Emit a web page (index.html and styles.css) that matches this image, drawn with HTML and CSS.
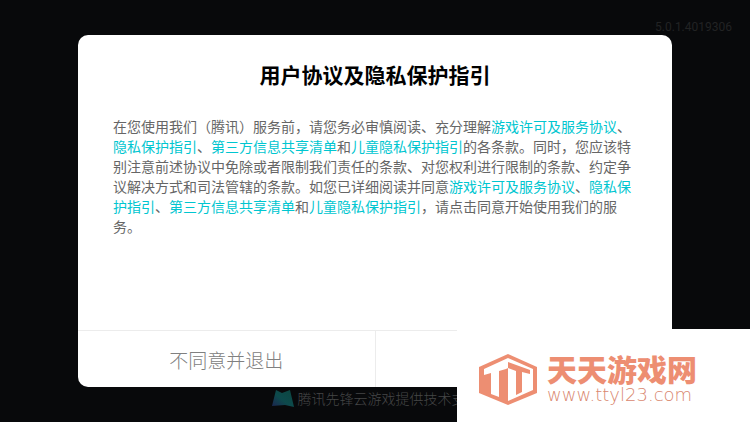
FILE: index.html
```
<!DOCTYPE html>
<html lang="zh-CN">
<head>
  <meta charset="utf-8">
  <title>用户协议及隐私保护指引</title>
  <link rel="stylesheet" href="styles.css">
</head>
<body>
  <header class="version">5.0.1.4019306</header>
  <main class="dialog">
    <h1 class="title">用户协议及隐私保护指引</h1>
    <p class="content">在您使用我们（腾讯）服务前，请您务必审慎阅读、充分理解<a href="#">游戏许可及服务协议</a>、<a href="#">隐私保护指引</a>、<a href="#">第三方信息共享清单</a>和<a href="#">儿童隐私保护指引</a>的各条款。同时，您应该特别注意前述协议中免除或者限制我们责任的条款、对您权利进行限制的条款、约定争议解决方式和司法管辖的条款。如您已详细阅读并同意<a href="#">游戏许可及服务协议</a>、<a href="#">隐私保护指引</a>、<a href="#">第三方信息共享清单</a>和<a href="#">儿童隐私保护指引</a>，请点击同意开始使用我们的服务。</p>
    <div class="btns">
      <button type="button" class="btn">不同意并退出</button>
      <button type="button" class="btn" aria-label="同意"></button>
    </div>
  </main>
  <footer class="support">
    <svg class="support-logo" width="23" height="19" viewBox="0 0 23 19">
      <defs>
        <linearGradient id="wing" x1="0" y1="1" x2="1" y2="0">
          <stop offset="0" stop-color="#1c2350"/>
          <stop offset="0.45" stop-color="#0d4a4c"/>
          <stop offset="1" stop-color="#0c4640"/>
        </linearGradient>
      </defs>
      <path fill="url(#wing)" d="M5 1l6 3 8-3 4 17-9-2-13 1z"/>
    </svg>
    <span>腾讯先锋云游戏提供技术支持</span>
  </footer>
  <!-- 站点水印 -->
  <aside class="watermark">
    <svg class="mark" width="58" height="52" viewBox="0 0 58 52">
      <path fill="#ed8e72" d="M29 0L58 13V39L29 51L0 39V13Z"/>
      <path fill="#fff" d="M5 15L29 4L54 15V36L29 47V14L27 15L20 17V43L12 40V19L5 21Z"/>
      <path fill="#ed8e72" d="M29 8L51 16V20L43 18V38L37 41V17L29 14Z"/>
    </svg>
    <div class="site">
      <strong class="site-name">天天游戏网</strong>
      <span class="site-url">www.ttyl23.com</span>
    </div>
  </aside>
</body>
</html>
```

FILE: styles.css
```
*{
  box-sizing: border-box;
}
body{
  display: flex;
  flex-direction: column;
  min-height: 100vh;
  margin: 0;
  background: #08090b;
  font-family: "Liberation Sans", "Noto Sans CJK SC", sans-serif;
}
.version{
  padding: 20px 18px 1px;
  color: #222324;
  font: 12px/14px Roboto, sans-serif;
  text-align: right;
}
.dialog{
  display: flex;
  flex: 1;
  flex-direction: column;
  margin: 0 78px;
  border-radius: 10px;
  background: #fff;
}
.title{
  margin: 0;
  padding: 26px 35px;
  color: #000;
  font-size: 21px;
  line-height: 30px;
  text-align: center;
}
.content{
  flex: 1;
  margin: 0;
  padding: 0 35px;
  color: #666;
  font-size: 14px;
  line-height: 20px;
}
.content a{
  color: #00c6d0;
  text-decoration: none;
}
.btns{
  display: flex;
  border-top: 1px solid #ececec;
}
.btn{
  flex: 1;
  height: 56px;
  padding: 0;
  border: 0;
  background: none;
  color: #808080;
  font-family: inherit;
  font-size: 19px;
  font-weight: 300;
}
.btn + .btn{
  border-left: 1px solid #ececec;
}
.support{
  display: flex;
  align-items: center;
  justify-content: center;
  gap: 4px;
  height: 35px;
  padding-bottom: 12px;
  color: #454647;
  font-size: 14px;
  font-weight: 300;
  line-height: 20px;
}
.watermark{
  position: absolute;
  right: 0;
  bottom: 0;
  display: flex;
  align-items: center;
  gap: 10px;
  padding: 25px 52px 16px 22px;
  background: #fff;
}
.site{
  display: flex;
  flex-direction: column;
  width: 151px;
  white-space: nowrap;
}
.site-name{
  color: #ed8e72;
  font-size: 30px;
  font-weight: 900;
  line-height: 30px;
}
.site-url{
  color: #d9876f;
  font: 200 18px/18px "DejaVu Sans", sans-serif;
}
```
